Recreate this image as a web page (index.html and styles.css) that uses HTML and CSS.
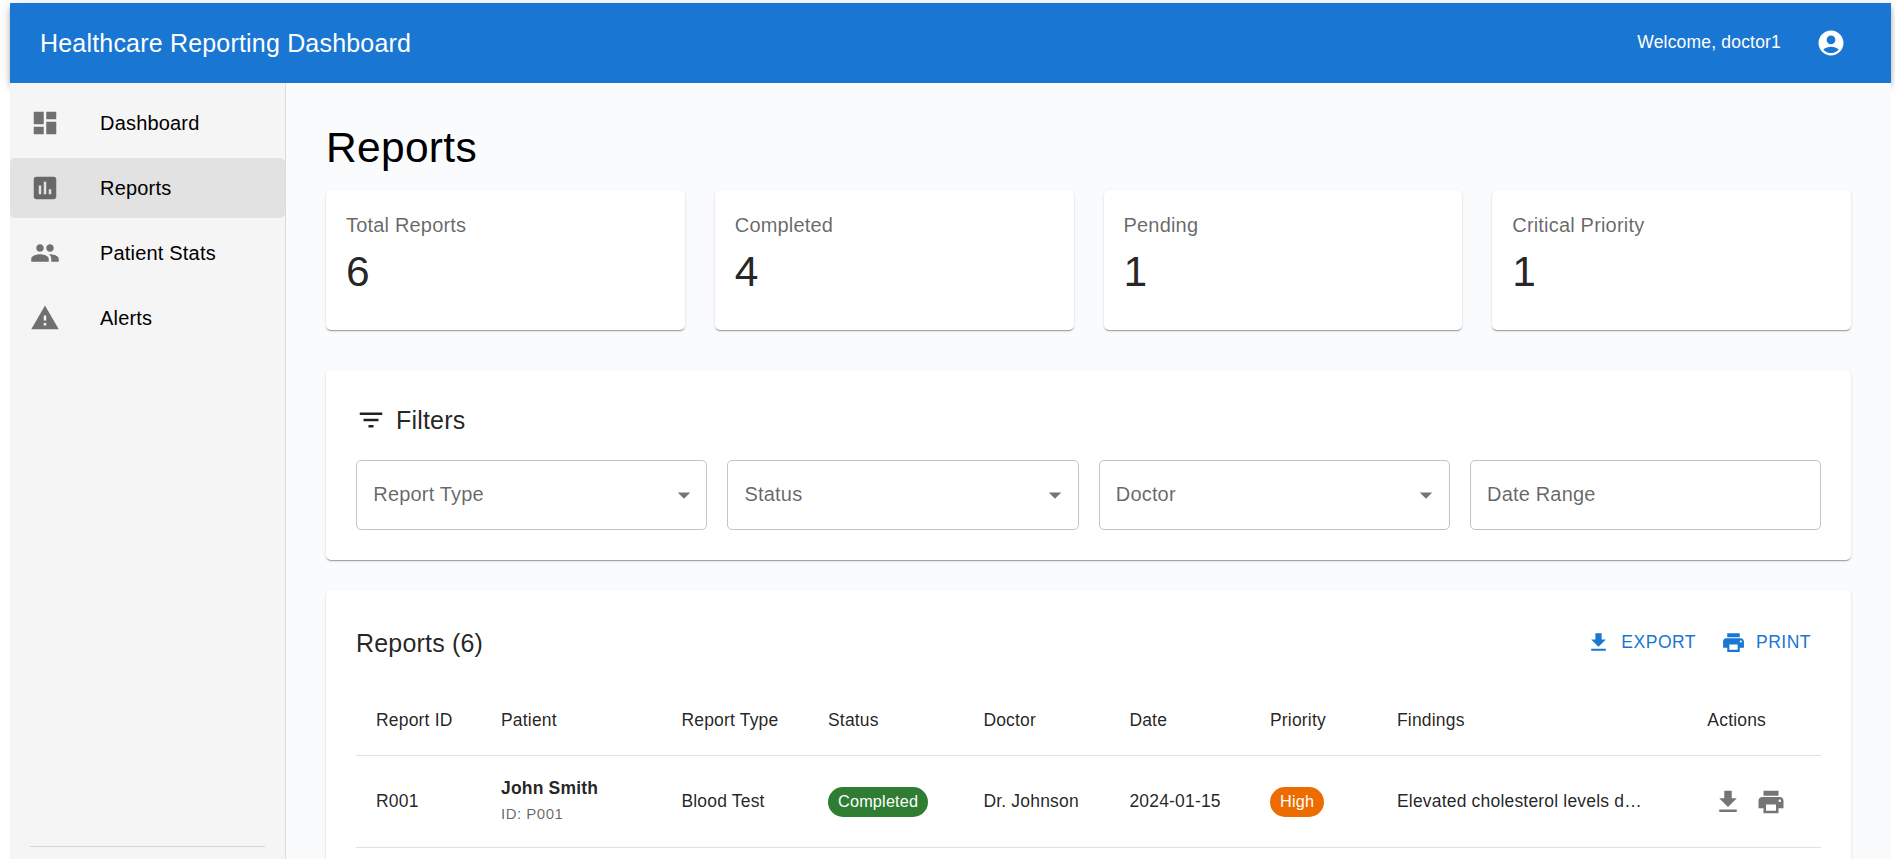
FILE: index.html
```html
<!DOCTYPE html>
<html lang="en">
<head>
<meta charset="utf-8">
<title>Healthcare Reporting Dashboard</title>
<link rel="stylesheet" href="styles.css">
</head>
<body>
<svg class="sprite" aria-hidden="true">
  <symbol id="download" viewBox="0 0 24 24"><path d="M19 9h-4V3H9v6H5l7 7 7-7zM5 18v2h14v-2H5z"/></symbol>
  <symbol id="print" viewBox="0 0 24 24"><path d="M19 8H5c-1.66 0-3 1.34-3 3v6h4v4h12v-4h4v-6c0-1.66-1.34-3-3-3zm-3 11H8v-5h8v5zm3-7c-.55 0-1-.45-1-1s.45-1 1-1 1 .45 1 1-.45 1-1 1zm-1-9H6v4h12V3z"/></symbol>
  <symbol id="arrow" viewBox="0 0 24 24"><path d="M7 10l5 5 5-5z"/></symbol>
</svg>
<div class="app">
  <header class="app-bar">
    <h1 class="app-title">Healthcare Reporting Dashboard</h1>
    <span class="welcome">Welcome, doctor1</span>
    <svg class="icon" viewBox="0 0 24 24"><path d="M12 2C6.48 2 2 6.48 2 12s4.48 10 10 10 10-4.48 10-10S17.52 2 12 2zm0 4c1.93 0 3.5 1.57 3.5 3.5S13.93 13 12 13s-3.5-1.57-3.5-3.5S10.07 6 12 6zm0 14c-2.03 0-4.43-.82-6.14-2.88C7.55 15.8 9.68 15 12 15s4.45.8 6.14 2.12C16.43 19.18 14.03 20 12 20z"/></svg>
  </header>
  <div class="body">
    <aside class="sidebar">
      <nav class="nav">
        <a class="nav-item"><svg class="icon" viewBox="0 0 24 24"><path d="M3 13h8V3H3v10zm0 8h8v-6H3v6zm10 0h8V11h-8v10zm0-18v6h8V3h-8z"/></svg>Dashboard</a>
        <a class="nav-item active"><svg class="icon" viewBox="0 0 24 24"><path d="M19 3H5c-1.1 0-2 .9-2 2v14c0 1.1.9 2 2 2h14c1.1 0 2-.9 2-2V5c0-1.1-.9-2-2-2zM9 17H7v-7h2v7zm4 0h-2V7h2v10zm4 0h-2v-4h2v4z"/></svg>Reports</a>
        <a class="nav-item"><svg class="icon" viewBox="0 0 24 24"><path d="M16 11c1.66 0 2.99-1.34 2.99-3S17.66 5 16 5c-1.66 0-3 1.34-3 3s1.34 3 3 3zm-8 0c1.66 0 2.99-1.34 2.99-3S9.66 5 8 5C6.34 5 5 6.34 5 8s1.34 3 3 3zm0 2c-2.33 0-7 1.17-7 3.5V19h14v-2.5c0-2.33-4.67-3.5-7-3.5zm8 0c-.29 0-.62.02-.97.05 1.16.84 1.97 1.97 1.97 3.45V19h6v-2.5c0-2.33-4.67-3.5-7-3.5z"/></svg>Patient Stats</a>
        <a class="nav-item"><svg class="icon" viewBox="0 0 24 24"><path d="M1 21h22L12 2 1 21zm12-3h-2v-2h2v2zm0-4h-2v-4h2v4z"/></svg>Alerts</a>
      </nav>
      <div class="sidebar-footer"></div>
    </aside>
    <main class="main">
      <h2 class="page-title">Reports</h2>
      <section class="stats">
        <div class="card stat"><div class="stat-label">Total Reports</div><div class="stat-value">6</div></div>
        <div class="card stat"><div class="stat-label">Completed</div><div class="stat-value">4</div></div>
        <div class="card stat"><div class="stat-label">Pending</div><div class="stat-value">1</div></div>
        <div class="card stat"><div class="stat-label">Critical Priority</div><div class="stat-value">1</div></div>
      </section>
      <section class="card filters">
        <h3 class="heading filters-heading"><svg class="icon" viewBox="0 0 24 24"><path d="M10 18h4v-2h-4v2zM3 6v2h18V6H3zm3 7h12v-2H6v2z"/></svg>Filters</h3>
        <div class="fields">
          <div class="field"><span>Report Type</span><svg class="icon"><use href="#arrow"/></svg></div>
          <div class="field"><span>Status</span><svg class="icon"><use href="#arrow"/></svg></div>
          <div class="field"><span>Doctor</span><svg class="icon"><use href="#arrow"/></svg></div>
          <div class="field"><span>Date Range</span></div>
        </div>
      </section>
      <section class="card reports">
        <div class="toolbar">
          <h3 class="heading">Reports (6)</h3>
          <div class="buttons">
            <button class="button"><svg><use href="#download"/></svg>EXPORT</button>
            <button class="button"><svg><use href="#print"/></svg>PRINT</button>
          </div>
        </div>
        <table class="table">
          <colgroup><col class="c-id"><col class="c-patient"><col class="c-type"><col class="c-status"><col class="c-doctor"><col class="c-date"><col class="c-priority"><col class="c-findings"><col></colgroup>
          <thead>
            <tr><th>Report ID</th><th>Patient</th><th>Report Type</th><th>Status</th><th>Doctor</th><th>Date</th><th>Priority</th><th>Findings</th><th>Actions</th></tr>
          </thead>
          <tbody>
            <tr>
              <td>R001</td>
              <td><div class="patient-cell"><div class="patient">John Smith</div><div class="patient-id">ID: P001</div></div></td>
              <td>Blood Test</td>
              <td><span class="chip success">Completed</span></td>
              <td>Dr. Johnson</td>
              <td>2024-01-15</td>
              <td><span class="chip warning">High</span></td>
              <td>Elevated cholesterol levels d…</td>
              <td><div class="actions"><svg class="icon"><use href="#download"/></svg><svg class="icon"><use href="#print"/></svg></div></td>
            </tr>
          </tbody>
        </table>
      </section>
    </main>
  </div>
</div>
</body>
</html>
```

FILE: styles.css
```css
* { box-sizing: border-box; }

body {
  margin: 0;
  height: 859px;
  overflow: hidden;
  background: #fff;
  font-family: "Liberation Sans", Arial, sans-serif;
  font-size: 20px;
  line-height: 30px;
  letter-spacing: 0.00938em;
  color: #000;
}

h1, h2, h3 { margin: 0; font-weight: 400; }

.sprite { display: none; }

.icon { width: 30px; height: 30px; flex: none; fill: currentColor; }

.app {
  display: flex;
  flex-direction: column;
  height: 859px;
  padding: 3px 4px 0 10px;
}

.app-bar {
  display: flex;
  align-items: center;
  flex: none;
  height: 80px;
  padding: 0 45px 0 30px;
  background: #1976d2;
  color: #fff;
  box-shadow: 0 2.5px 5px -1px rgba(0,0,0,.2), 0 5px 6px rgba(0,0,0,.14), 0 1px 12.5px rgba(0,0,0,.12);
}

.app-title { flex: 1; font-size: 25px; line-height: 40px; letter-spacing: 0.0075em; }

.welcome {
  margin-right: 35px;
  padding-bottom: 2px;
  font-size: 17.5px;
  line-height: 25px;
  letter-spacing: 0.01071em;
}

.body { position: relative; display: flex; flex: 1; min-height: 0; }

.sidebar {
  display: flex;
  flex-direction: column;
  width: 276px;
  flex: none;
  padding-top: 10px;
  background: #f5f5f5;
  border-right: 1px solid #dcdcdc;
}

.nav { display: flex; flex: 1; flex-direction: column; gap: 5px; }

.nav-item {
  display: flex;
  align-items: center;
  gap: 40px;
  height: 60px;
  padding: 0 20px;
  border-radius: 5px;
}

.nav-item .icon { color: rgba(0,0,0,.54); }
.nav-item.active { background: #e2e2e2; }

.sidebar-footer { height: 13px; margin: 0 20px; border-top: 1px solid #d6d6d6; }

.main {
  flex: 1;
  min-width: 0;
  padding: 39px 40px 0;
  background: #fafbfd;
  overflow: hidden;
}

.page-title { height: 68px; font-size: 42.5px; line-height: 52px; letter-spacing: 0.00735em; }

.card {
  background: #fff;
  color: rgba(0,0,0,.87);
  border-radius: 5px;
  box-shadow: 0 2px 1px -1px rgba(0,0,0,.2), 0 1px 1px rgba(0,0,0,.14), 0 1px 3px rgba(0,0,0,.12);
}

.stats { display: grid; grid-template-columns: repeat(4, 1fr); gap: 30px; }
.stat { height: 140px; padding: 20px; }
.stat-label { margin-bottom: 6px; color: rgba(0,0,0,.6); }
.stat-value { font-size: 42.5px; line-height: 52px; letter-spacing: 0.00735em; }

.filters { height: 190px; margin-top: 40px; padding: 30px; }
.heading { font-size: 25px; line-height: 40px; letter-spacing: 0.0075em; }
.filters-heading { display: flex; align-items: center; gap: 10px; margin-bottom: 20px; }

.fields { display: grid; grid-template-columns: repeat(4, 1fr); gap: 20px; }

.field {
  display: flex;
  align-items: center;
  justify-content: space-between;
  height: 70px;
  padding: 0 7.5px 2px 16.25px;
  border: 1px solid #c4c4c4;
  border-radius: 5px;
  color: rgba(0,0,0,.6);
}
.field .icon { margin-top: 2px; color: rgba(0,0,0,.54); }

.reports { height: 400px; margin-top: 30px; padding: 30px; }
.toolbar { display: flex; align-items: center; justify-content: space-between; height: 65px; padding-bottom: 20px; }
.buttons { display: flex; gap: 10px; padding-bottom: 1px; }

.button {
  display: flex;
  align-items: center;
  gap: 10px;
  height: 44px;
  padding: 0 10px 0 5px;
  border: 0;
  background: none;
  color: #1976d2;
  font: 17.5px/30px "Liberation Sans", Arial, sans-serif;
  letter-spacing: 0.02857em;
}
.button svg { width: 25px; height: 25px; fill: currentColor; }

.table {
  width: 100%;
  table-layout: fixed;
  border-collapse: separate;
  border-spacing: 0;
  font-size: 17.5px;
  line-height: 25px;
  letter-spacing: 0.01071em;
}
.table th { height: 71px; font-weight: 400; }
.table td { height: 92px; }
.table th, .table td {
  padding: 0 0 0 20px;
  text-align: left;
  vertical-align: middle;
  white-space: nowrap;
  border-bottom: 1px solid #e0e0e0;
}

.c-id { width: 125px; }
.c-patient { width: 180.4px; }
.c-type { width: 146.6px; }
.c-status { width: 155.4px; }
.c-doctor { width: 146px; }
.c-date { width: 140.6px; }
.c-priority { width: 127px; }
.c-findings { width: 310.4px; }

.patient-cell { padding-bottom: 2px; }
.patient { font-weight: 700; }
.patient-id { font-size: 15px; letter-spacing: 0.03333em; color: rgba(0,0,0,.6); }

.chip {
  display: inline-flex;
  align-items: center;
  height: 30px;
  padding: 0 10px;
  border-radius: 15px;
  color: #fff;
  font-size: 16.25px;
  vertical-align: middle;
}
.success { background: #2e7d32; }
.warning { background: #ed6c02; }

.actions { display: flex; gap: 12.5px; padding-left: 6px; color: rgba(0,0,0,.54); }
```
